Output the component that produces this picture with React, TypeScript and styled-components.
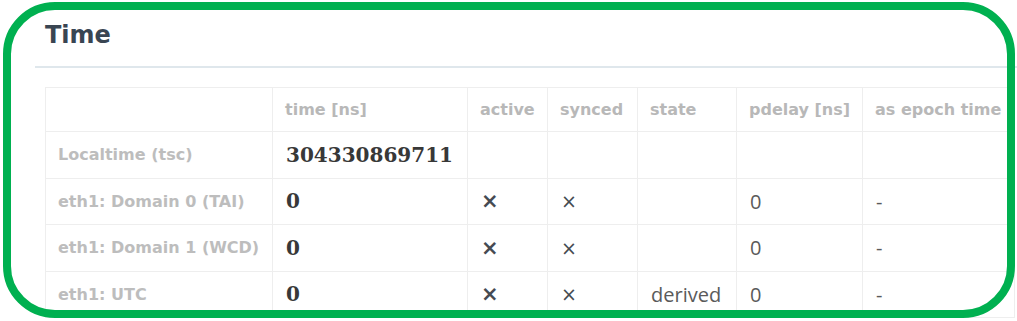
import React from "react";
import styled, { createGlobalStyle } from "styled-components";

const GlobalStyle = createGlobalStyle`
  html, body {
    margin: 0;
    padding: 0;
    background: #ffffff;
  }
  body {
    width: 1017px;
    height: 321px;
    overflow: hidden;
    font-family: "DejaVu Sans", Verdana, sans-serif;
  }
`;

const Page = styled.div`
  position: relative;
  width: 1017px;
  height: 321px;
  overflow: hidden;
  background: #ffffff;
`;

const Section = styled.section`
  margin-left: 35px;
`;

const SectionHeader = styled.header`
  padding: 21px 10px 17px;
  border-bottom: 2px solid #dfe7ec;
`;

const Title = styled.h2`
  margin: 0;
  font-family: "DejaVu Sans", Verdana, sans-serif;
  font-size: 24px;
  line-height: 28px;
  font-weight: bold;
  color: #394552;
`;

const Table = styled.table`
  margin: 19px 0 0 10px;
  width: 969px;
  table-layout: fixed;
  border-collapse: collapse;
  border: 1px solid #eeeeee;
`;

const HeadCell = styled.th`
  height: 43px;
  padding: 0 12px;
  border: 1px solid #eeeeee;
  text-align: left;
  vertical-align: middle;
  font-family: "DejaVu Sans", Verdana, sans-serif;
  font-size: 16px;
  font-weight: bold;
  color: #b8b8b8;
  white-space: nowrap;
  overflow: hidden;
`;

const LabelCell = styled.th`
  height: 45.5px;
  padding: 0 12px;
  border: 1px solid #eeeeee;
  text-align: left;
  vertical-align: middle;
  font-family: "DejaVu Sans", Verdana, sans-serif;
  font-size: 16px;
  font-weight: bold;
  color: #bdbdbd;
  white-space: nowrap;
`;

type Kind = "time" | "mark" | "soft" | "plain" | "dash";

const Cell = styled.td<{ $kind: Kind }>`
  height: 45.5px;
  padding: 0 13px;
  border: 1px solid #eeeeee;
  vertical-align: middle;
  white-space: nowrap;
  font-family: ${({ $kind }) =>
    $kind === "time"
      ? `"DejaVu Serif", Georgia, serif`
      : $kind === "mark" || $kind === "soft"
      ? `"DejaVu Sans", Verdana, sans-serif`
      : `"Open Sans", "Noto Sans", sans-serif`};
  font-size: ${({ $kind }) =>
    $kind === "time" ? "20px" : $kind === "mark" ? "21px" : $kind === "soft" ? "19px" : "20px"};
  font-weight: ${({ $kind }) => ($kind === "time" || $kind === "mark" ? "bold" : "normal")};
  color: ${({ $kind }) =>
    $kind === "time" ? "#383838" : $kind === "mark" || $kind === "soft" ? "#464b52" : "#5a5a5a"};
`;

const Annotation = styled.div`
  position: absolute;
  left: 3px;
  top: 2px;
  right: 2px;
  bottom: 3px;
  border: 8px solid #00b050;
  border-radius: 52px;
  pointer-events: none;
`;

const columns = [227, 195, 80, 90, 99, 126, 152];
const headers = ["", "time [ns]", "active", "synced", "state", "pdelay [ns]", "as epoch time"];

type Row = {
  label: string;
  time: string;
  active: string;
  synced: string;
  state: string;
  pdelay: string;
  epoch: string;
};

const rows: Row[] = [
  { label: "Localtime (tsc)", time: "304330869711", active: "", synced: "", state: "", pdelay: "", epoch: "" },
  { label: "eth1: Domain 0 (TAI)", time: "0", active: "×", synced: "×", state: "", pdelay: "0", epoch: "-" },
  { label: "eth1: Domain 1 (WCD)", time: "0", active: "×", synced: "×", state: "", pdelay: "0", epoch: "-" },
  { label: "eth1: UTC", time: "0", active: "×", synced: "×", state: "derived", pdelay: "0", epoch: "-" },
];

export default function App() {
  return (
    <Page>
      <GlobalStyle />
      <Section>
        <SectionHeader>
          <Title>Time</Title>
        </SectionHeader>
        <Table>
          <colgroup>
            {columns.map((w, i) => (
              <col key={i} style={{ width: w }} />
            ))}
          </colgroup>
          <thead>
            <tr>
              {headers.map((h, i) => (
                <HeadCell key={i}>{h}</HeadCell>
              ))}
            </tr>
          </thead>
          <tbody>
            {rows.map((r) => (
              <tr key={r.label}>
                <LabelCell>{r.label}</LabelCell>
                <Cell $kind="time">{r.time}</Cell>
                <Cell $kind="mark">{r.active}</Cell>
                <Cell $kind="soft">{r.synced}</Cell>
                <Cell $kind="plain">{r.state}</Cell>
                <Cell $kind="plain">{r.pdelay}</Cell>
                <Cell $kind="dash">{r.epoch}</Cell>
              </tr>
            ))}
          </tbody>
        </Table>
      </Section>
      <Annotation />
    </Page>
  );
}
